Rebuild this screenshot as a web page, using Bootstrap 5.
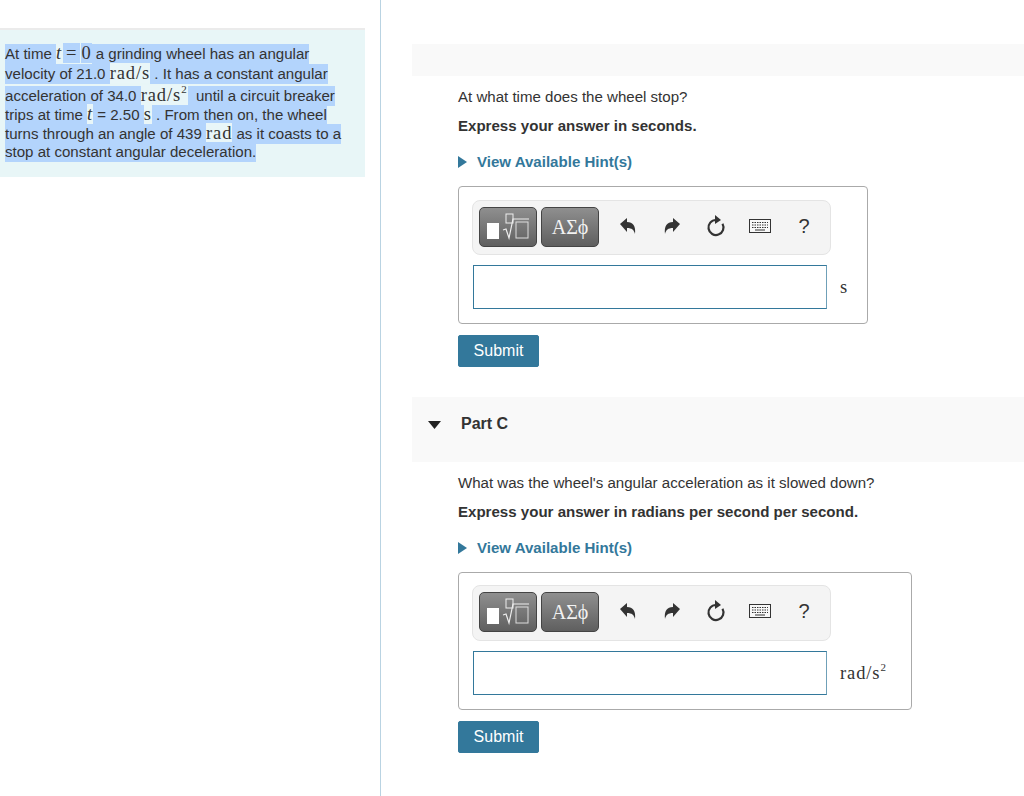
<!DOCTYPE html>
<html lang="en">
<head>
<meta charset="utf-8">
<title>Part C</title>
<link href="https://cdn.jsdelivr.net/npm/bootstrap@5.3.0/dist/css/bootstrap.min.css" rel="stylesheet">
<style>
html,body{height:796px;overflow:hidden;background:#fff}
body{font-family:"Liberation Sans",Arial,sans-serif;font-size:15.07px;color:#333;line-height:20px}
.shell{height:796px}
.leftpane{width:381px;flex:none;border-right:1px solid #b9d3e2;padding-top:28px}
.ctxbox{width:365px;height:149px;background:#e8f6f7;border-top:2px solid #ebebeb;padding-top:13px}
.ctxline{height:19px;line-height:20px;white-space:nowrap;margin-left:5px}
.ctxline.h20{height:20px}
.ctxline.h22{height:22px}
.hl{background:#b3d4fc;padding:1px 0 2px}
.mth{font-family:"Liberation Serif",serif;font-size:18.5px;letter-spacing:.9px;background:#e9f6f8;color:#333}
.mth.on{background:#b3d4fc}
.mth.eq{padding:0 3px;margin:0 1px}
sup.sq{font-size:11px;line-height:0;top:-.7em;position:relative;vertical-align:baseline}
.rightpane{flex:1;padding:44px 0 0 31px;min-width:0}
.topband{height:32px;background:#f9f9f9}
.partbody{padding-left:46px}
.ask{margin:0;height:20px}
.ask.first{margin-top:11px}
.ask.first.low{margin-top:11px}
.ask.strong{margin-top:9px;font-weight:700}
.hintrow{margin-top:16px;height:20px;color:#33789b;font-weight:700;gap:10px}
.anbox{margin-top:14px;border:1px solid #aaa;border-radius:4px;padding:13px 0 13px 13px}
.anbox.w1{width:410px;height:138px}
.anbox.w2{width:454px;height:138px;padding-top:12px}
.tbar{width:359px;height:55px;background:#f4f4f4;border:1px solid #e4e4e4;border-radius:8px;padding:6px 0 0 6px}
.w2 .tbar{height:56px}
.w2 .inrow{margin-top:10px}
.mbtn{width:58px;height:40px;border:1px solid #444;border-radius:5px;background:linear-gradient(#8f8f8f,#5f5f5f);color:#f2f2f2;font-family:"Liberation Serif",serif;font-size:20px;padding:0;margin-right:4px;line-height:1}
.tools{margin-left:3px;margin-top:-1px}
.tico{width:44px;height:40px;flex:none}
.tico svg{display:block}
.tq{font-size:20px;color:#333}
.inrow{margin-top:10px;height:44px}
.mfield{width:354px;height:44px;margin-left:1px;border:1px solid #33789b;border-right-color:#6fa0b8;background:#fff;border-radius:0}
.unit{margin-left:13px;font-family:"Liberation Serif",serif;font-size:18.5px;letter-spacing:.9px;color:#333}
.sendbtn{margin-top:11px;width:81px;height:32px;background:#33789b;border:1px solid #33789b;color:#fff;border-radius:2px;font-size:16px;padding:0;font-weight:400}
.sendbtn:hover{background:#33789b;color:#fff}
.partband{margin-top:30px;height:65px;background:#f9f9f9;padding:17px 0 0 16px;gap:20px;align-items:flex-start}
.partband b{font-size:16px;line-height:20px;color:#333}
.caret{margin-top:7px}
</style>
</head>
<body>
<div class="shell d-flex">
  <aside class="leftpane">
    <div class="ctxbox">
      <div class="ctxline h20"><span class="hl">At time </span><span class="mth"><i>t</i></span><span class="mth on eq">=</span><span class="mth on">0</span><span class="hl"> a grinding wheel has an angular</span></div>
      <div class="ctxline h22"><span class="hl">velocity of 21.0 </span><span class="mth">rad/s</span><span class="hl"> . It has a constant angular</span></div>
      <div class="ctxline"><span class="hl">acceleration of 34.0 </span><span class="mth">rad/s<sup class="sq">2</sup></span><span class="hl"> &nbsp;until a circuit breaker</span></div>
      <div class="ctxline"><span class="hl">trips at time </span><span class="mth"><i>t</i></span><span class="hl"> = 2.50 </span><span class="mth">s</span><span class="hl"> . From then on, the wheel</span></div>
      <div class="ctxline"><span class="hl">turns through an angle of 439 </span><span class="mth">rad</span><span class="hl"> as it coasts to a</span></div>
      <div class="ctxline h20"><span class="hl">stop at constant angular deceleration.</span></div>
    </div>
  </aside>
  <main class="rightpane">
    <div class="topband"></div>
    <section class="partbody">
      <p class="ask first">At what time does the wheel stop?</p>
      <p class="ask strong">Express your answer in seconds.</p>
      <div class="hintrow d-flex align-items-center">
        <svg width="9" height="12" viewBox="0 0 9 12"><path d="M0 0 9 6 0 12z" fill="#33789b"/></svg>
        <span>View Available Hint(s)</span>
      </div>
      <div class="anbox w1">
        <div class="tbar d-flex align-items-start">
          <button class="mbtn d-flex align-items-center justify-content-center" type="button" aria-label="Templates">
            <svg width="50" height="32" viewBox="0 0 50 32"><rect x="4" y="12" width="12" height="16" fill="#fff"/><rect x="23" y="3" width="7" height="9" fill="none" stroke="#eee"/><path d="M20 19l3 -1 3 9 4-19h16" fill="none" stroke="#eee" stroke-width="1.2"/><rect x="33" y="11" width="12" height="16" fill="none" stroke="#ddd"/></svg>
          </button>
          <button class="mbtn" type="button">ΑΣϕ</button>
          <div class="d-flex align-items-center tools">
            <span class="tico d-flex align-items-center justify-content-center"><svg width="18" height="20" viewBox="0 0 18 20"><path d="M1 8 8 2v4c6 0 9 4 8 12-1-4-3-6-8-6v4z" fill="#333"/></svg></span>
            <span class="tico d-flex align-items-center justify-content-center"><svg width="18" height="20" viewBox="0 0 18 20"><path d="M17 8 10 2v4C4 6 1 10 2 18c1-4 3-6 8-6v4z" fill="#333"/></svg></span>
            <span class="tico d-flex align-items-center justify-content-center"><svg width="20" height="22" viewBox="0 0 20 22"><path d="M10 5a7.500 7.500 0 1 0 6.500 3.800" fill="none" stroke="#333" stroke-width="2.2"/><path d="M9 0l6 5-6 4z" fill="#333"/></svg></span>
            <span class="tico d-flex align-items-center justify-content-center"><svg width="22" height="14" viewBox="0 0 22 14"><rect x=".5" y=".5" width="21" height="13" fill="#f8f8f8" stroke="#333"/><path d="M3 3.500h16M3 6h16M3 8.500h16" stroke="#333" stroke-dasharray="1.500 1"/><path d="M6 11h10" stroke="#333"/></svg></span>
            <span class="tico d-flex align-items-center justify-content-center tq">?</span>
          </div>
        </div>
        <div class="inrow d-flex align-items-center">
          <div class="mfield"></div><span class="unit">s</span>
        </div>
      </div>
      <button class="sendbtn btn d-block" type="button">Submit</button>
    </section>
    <header class="partband d-flex">
      <svg class="caret" width="13" height="8" viewBox="0 0 13 8"><path d="M0 0h13L6.500 8z" fill="#222"/></svg>
      <b>Part C</b>
    </header>
    <section class="partbody">
      <p class="ask first low">What was the wheel's angular acceleration as it slowed down?</p>
      <p class="ask strong">Express your answer in radians per second per second.</p>
      <div class="hintrow d-flex align-items-center">
        <svg width="9" height="12" viewBox="0 0 9 12"><path d="M0 0 9 6 0 12z" fill="#33789b"/></svg>
        <span>View Available Hint(s)</span>
      </div>
      <div class="anbox w2">
        <div class="tbar d-flex align-items-start">
          <button class="mbtn d-flex align-items-center justify-content-center" type="button" aria-label="Templates">
            <svg width="50" height="32" viewBox="0 0 50 32"><rect x="4" y="12" width="12" height="16" fill="#fff"/><rect x="23" y="3" width="7" height="9" fill="none" stroke="#eee"/><path d="M20 19l3 -1 3 9 4-19h16" fill="none" stroke="#eee" stroke-width="1.2"/><rect x="33" y="11" width="12" height="16" fill="none" stroke="#ddd"/></svg>
          </button>
          <button class="mbtn" type="button">ΑΣϕ</button>
          <div class="d-flex align-items-center tools">
            <span class="tico d-flex align-items-center justify-content-center"><svg width="18" height="20" viewBox="0 0 18 20"><path d="M1 8 8 2v4c6 0 9 4 8 12-1-4-3-6-8-6v4z" fill="#333"/></svg></span>
            <span class="tico d-flex align-items-center justify-content-center"><svg width="18" height="20" viewBox="0 0 18 20"><path d="M17 8 10 2v4C4 6 1 10 2 18c1-4 3-6 8-6v4z" fill="#333"/></svg></span>
            <span class="tico d-flex align-items-center justify-content-center"><svg width="20" height="22" viewBox="0 0 20 22"><path d="M10 5a7.500 7.500 0 1 0 6.500 3.800" fill="none" stroke="#333" stroke-width="2.2"/><path d="M9 0l6 5-6 4z" fill="#333"/></svg></span>
            <span class="tico d-flex align-items-center justify-content-center"><svg width="22" height="14" viewBox="0 0 22 14"><rect x=".5" y=".5" width="21" height="13" fill="#f8f8f8" stroke="#333"/><path d="M3 3.500h16M3 6h16M3 8.500h16" stroke="#333" stroke-dasharray="1.500 1"/><path d="M6 11h10" stroke="#333"/></svg></span>
            <span class="tico d-flex align-items-center justify-content-center tq">?</span>
          </div>
        </div>
        <div class="inrow d-flex align-items-center">
          <div class="mfield"></div><span class="unit">rad/s<sup class="sq">2</sup></span>
        </div>
      </div>
      <button class="sendbtn btn d-block" type="button">Submit</button>
    </section>
  </main>
</div>
</body>
</html>
